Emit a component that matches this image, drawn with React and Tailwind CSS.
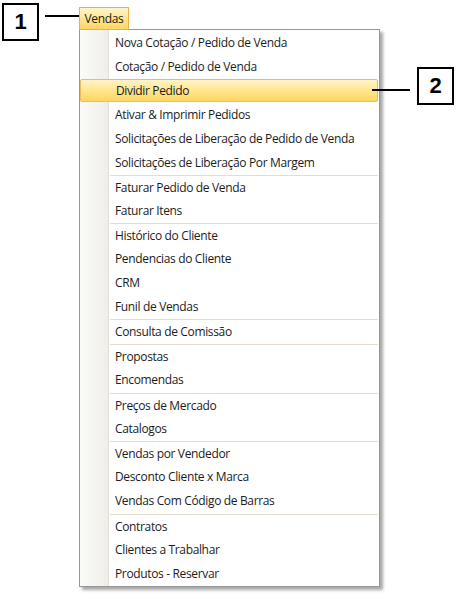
import React from 'react';

// each group is separated by a thin line; `gap` adds one extra pixel before it
const groups = [
  { gap: 0, items: ['Nova Cotação / Pedido de Venda', 'Cotação / Pedido de Venda', 'Dividir Pedido', 'Ativar & Imprimir Pedidos', 'Solicitações de Liberação de Pedido de Venda', 'Solicitações de Liberação Por Margem'] },
  { gap: 0, items: ['Faturar Pedido de Venda', 'Faturar Itens'] },
  { gap: 0, items: ['Histórico do Cliente', 'Pendencias do Cliente', 'CRM', 'Funil de Vendas'] },
  { gap: 0, items: ['Consulta de Comissão'] },
  { gap: 1, items: ['Propostas', 'Encomendas'] },
  { gap: 1, items: ['Preços de Mercado', 'Catalogos'] },
  { gap: 0, items: ['Vendas por Vendedor', 'Desconto Cliente x Marca', 'Vendas Com Código de Barras'] },
  { gap: 1, items: ['Contratos', 'Clientes a Trabalhar', 'Produtos - Reservar'] },
];

const Callout = ({ label, className }) => (
  <div className={`w-[37px] h-[38px] border-2 border-black bg-white flex items-center justify-center text-[22px] font-bold text-black leading-none tracking-normal font-['Liberation_Sans',Arial,sans-serif] ${className || ''}`}>
    {label}
  </div>
);

const MenuItem = ({ label, separator, gap }) => {
  const active = label === 'Dividir Pedido';

  if (active) {
    return (
      <div className="relative h-[24px] mr-px">
        <div className="h-[23px] flex items-center pl-[35px] rounded-[2px] border border-[#edbd59] bg-[linear-gradient(to_bottom,#fff4c6,#ffe68f_50%,#ffd65e)]">
          <span>{label}</span>
        </div>
        {/* callout 2 */}
        <div className="absolute left-[292px] top-[-12px] flex items-start">
          <div className="w-[38px] h-[2px] bg-black mt-[22px]" />
          <Callout label="2" className="ml-[7px] h-[36px]" />
        </div>
      </div>
    );
  }

  return (
    <div className={`h-[24px] pl-[30px] mr-px ${gap ? 'mt-px' : ''}`}>
      <div className={`h-full flex items-center pl-[5px] ${separator ? 'border-t border-[#e6decd]' : ''}`}>
        <span>{label}</span>
      </div>
    </div>
  );
};

export default function App() {
  return (
    <div className="w-[459px] h-[599px] bg-white relative overflow-hidden font-['Segoe_UI','Open_Sans',sans-serif] text-[12px] tracking-[-0.35px] text-[#1c1c1c]">
      {/* top bar with callout 1 */}
      <div className="flex items-start h-[29px]">
        <Callout label="1" className="mt-[3px] ml-[2px] shrink-0" />
        <div className="w-[35px] h-[2px] bg-black mt-[15px] ml-[6px]" />
        <div className="mt-[7px] h-[23px] w-[50px] ml-[-1px] border border-[#e6b24d] bg-[linear-gradient(to_bottom,#fff5cc,#ffe58c_55%,#ffd466)] flex items-center justify-center relative z-10">
          Vendas
        </div>
      </div>

      {/* dropdown */}
      <div className="ml-[79px] w-[301px] border border-[#979797] pt-px shadow-[3px_3px_3px_rgba(0,0,0,0.35)] bg-[linear-gradient(to_right,#fbfbf9_0px,#f0eee8_28px,#e3e0d8_28px,#e3e0d8_29px,#ffffff_29px)]">
        {groups.map((g, gi) =>
          g.items.map((label, i) => (
            <MenuItem
              key={label}
              label={label}
              separator={gi > 0 && i === 0}
              gap={i === 0 && g.gap}
            />
          ))
        )}
      </div>
    </div>
  );
}
